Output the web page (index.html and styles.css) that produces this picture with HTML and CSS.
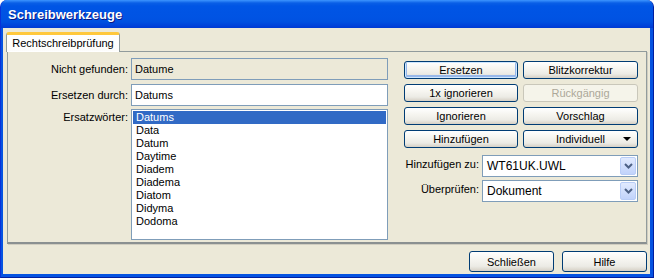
FILE: index.html
```html
<!DOCTYPE html>
<html lang="de">
<head>
  <meta charset="UTF-8" />
  <title>Schreibwerkzeuge</title>
  <link rel="stylesheet" href="styles.css">
</head>
<body>
  <div class="window">
    <div class="titlebar">Schreibwerkzeuge</div>
    <div class="client">

      <!-- Tab strip -->
      <div class="tabs">
        <div class="tab">Rechtschreibprüfung</div>
      </div>

      <div class="panel">
        <!-- Left: words -->
        <div class="fields">
          <label class="lbl lbl-first">Nicht gefunden:</label>
          <div class="field field-ro">Datume</div>
          <label class="lbl">Ersetzen durch:</label>
          <div class="field">Datums</div>
          <label class="lbl lbl-list">Ersatzwörter:</label>
          <ul class="list">
            <li class="selected">Datums</li>
            <li>Data</li>
            <li>Datum</li>
            <li>Daytime</li>
            <li>Diadem</li>
            <li>Diadema</li>
            <li>Diatom</li>
            <li>Didyma</li>
            <li>Dodoma</li>
          </ul>
        </div>

        <!-- Right: actions -->
        <div class="actions">
          <div class="btn-grid">
            <button class="btn default">Ersetzen</button>
            <button class="btn">Blitzkorrektur</button>
            <button class="btn">1x ignorieren</button>
            <button class="btn" disabled>Rückgängig</button>
            <button class="btn">Ignorieren</button>
            <button class="btn">Vorschlag</button>
            <button class="btn">Hinzufügen</button>
            <button class="btn btn-menu">Individuell<span class="caret"></span></button>
          </div>
          <div class="combos">
            <label class="lbl">Hinzufügen zu:</label>
            <div class="combo"><span>WT61UK.UWL</span><span class="combo-btn"><svg width="9" height="6" viewBox="0 0 9 6"><path d="M1 1 L4.5 4.5 L8 1" fill="none" stroke="#4d6185" stroke-width="2"/></svg></span></div>
            <label class="lbl">Überprüfen:</label>
            <div class="combo"><span>Dokument</span><span class="combo-btn"><svg width="9" height="6" viewBox="0 0 9 6"><path d="M1 1 L4.5 4.5 L8 1" fill="none" stroke="#4d6185" stroke-width="2"/></svg></span></div>
          </div>
        </div>
      </div>

      <div class="footer">
        <button class="btn btn-foot">Schließen</button>
        <button class="btn btn-foot">Hilfe</button>
      </div>
    </div>
  </div>
</body>
</html>
```

FILE: styles.css
```css
body {
  margin: 0;
  padding: 0;
  background: #fff;
  font-family: 'Liberation Sans', Arial, sans-serif;
  font-size: 11px;
  color: #000;
}
.window {
  width: 654px;
  height: 278px;
  box-sizing: border-box;
  background: #0553e1;
  border-left: 1px solid #0831d9;
  border-right: 1px solid #001ea0;
  border-bottom: 1px solid #001ea0;
  border-radius: 7px 7px 0 0;
  padding: 0 3px 3px 2px;
  display: flex;
  flex-direction: column;
  overflow: hidden;
}
.titlebar {
  height: 28px;
  margin: 0 -3px 0 -2px;
  padding-left: 7px;
  line-height: 30px;
  color: #fff;
  font-weight: bold;
  font-size: 13px;
  text-shadow: 1px 1px 0 #0a1883;
  background: linear-gradient(to bottom, #3d95ff 0px, #0a5fe6 3px, #0055e5 6px, #0053e3 18px, #0050e0 22px, #003dd7 27px, #003bd0 28px);
}
.client {
  flex: 1;
  background: #ece9d8;
  display: flex;
  flex-direction: column;
  padding: 4px 3px 0 4px;
}

/* tabs */
.tabs {
  display: flex;
  padding-left: 0;
  height: 19px;
  position: relative;
  z-index: 1;
  margin-left: -1px;
}
.tab {
  width: 114px;
  box-sizing: border-box;
  background: linear-gradient(to bottom, #fff, #fcfcfb);
  border: 1px solid #919b9c;
  border-top: 3px solid #ffc83c;
  border-bottom: none;
  border-radius: 3px 3px 0 0;
  box-shadow: inset 0 -1px 0 #fff;
  text-align: center;
  line-height: 16px;
  height: 20px;
}

/* main panel */
.panel {
  height: 193px;
  box-sizing: border-box;
  border: 1px solid #919b9c;
  border-bottom: 2px solid #8a9091;
  box-shadow: 1px 1px 0 #d0cdc0;
  display: flex;
  padding: 6px 0 0 0;
}
.fields {
  display: grid;
  grid-template-columns: 120px 257px;
  grid-template-rows: 22px 22px 130px;
  column-gap: 3px;
  row-gap: 4px;
  align-content: start;
}
.lbl {
  text-align: right;
  white-space: nowrap;
}
.fields .lbl {
  line-height: 22px;
}
.fields .lbl-list {
  line-height: 14px;
}
.field {
  box-sizing: border-box;
  border: 1px solid #7f9db9;
  background: #fff;
  padding-left: 3px;
  line-height: 20px;
}
.field-ro {
  background: #ece9d8;
}
.list {
  margin: 0;
  padding: 1px;
  list-style: none;
  border: 1px solid #7f9db9;
  background: #fff;
  box-sizing: border-box;
  margin-top: -1px;
}
.list li {
  height: 13px;
  line-height: 13px;
  padding-left: 3px;
}
.list li.selected {
  background: #316ac5;
  color: #fff;
}

/* right side */
.actions {
  margin-left: 16px;
  padding-top: 3px;
}
.btn-grid {
  display: grid;
  grid-template-columns: 114px 115px;
  grid-auto-rows: 18px;
  gap: 5px;
}
.btn {
  font-family: inherit;
  font-size: 11px;
  color: #000;
  box-sizing: border-box;
  border: 1px solid #003c74;
  border-radius: 3px;
  background: linear-gradient(to bottom, #ffffff 0%, #f6f5f0 40%, #ecebe5 75%, #d6d0c5 100%);
  padding: 0;
  margin: 0;
  position: relative;
}
.btn.default {
  box-shadow: inset 0 0 0 1px #cee7ff, inset 0 -1px 0 2px #98b8ea;
}
.btn:disabled {
  border-color: #c9c7ba;
  color: #aca899;
  background: #f5f4ea;
}
.caret {
  position: absolute;
  right: 6px;
  top: 6px;
  border-left: 4px solid transparent;
  border-right: 4px solid transparent;
  border-top: 4px solid #000;
}
.combos {
  display: grid;
  grid-template-columns: 75px 156px;
  grid-auto-rows: 22px;
  column-gap: 3px;
  row-gap: 3px;
  margin-top: 7px;
}
.combos .lbl {
  line-height: 18px;
}
.combo {
  box-sizing: border-box;
  border: 1px solid #7f9db9;
  background: #fff;
  display: flex;
  justify-content: space-between;
  padding: 1px;
  line-height: 18px;
}
.combo span:first-child {
  padding-left: 3px;
  font-size: 12px;
}
.combo-btn {
  width: 16px;
  height: 18px;
  box-sizing: border-box;
  border: 1px solid #b9cdf7;
  border-radius: 2px;
  background: linear-gradient(to bottom, #e1eafe, #c1d3fb);
  display: flex;
  align-items: center;
  justify-content: center;
}

/* footer */
.footer {
  display: flex;
  justify-content: flex-end;
  gap: 8px;
  padding-top: 7px;
}
.btn-foot {
  width: 85px;
  height: 21px;
}
```
